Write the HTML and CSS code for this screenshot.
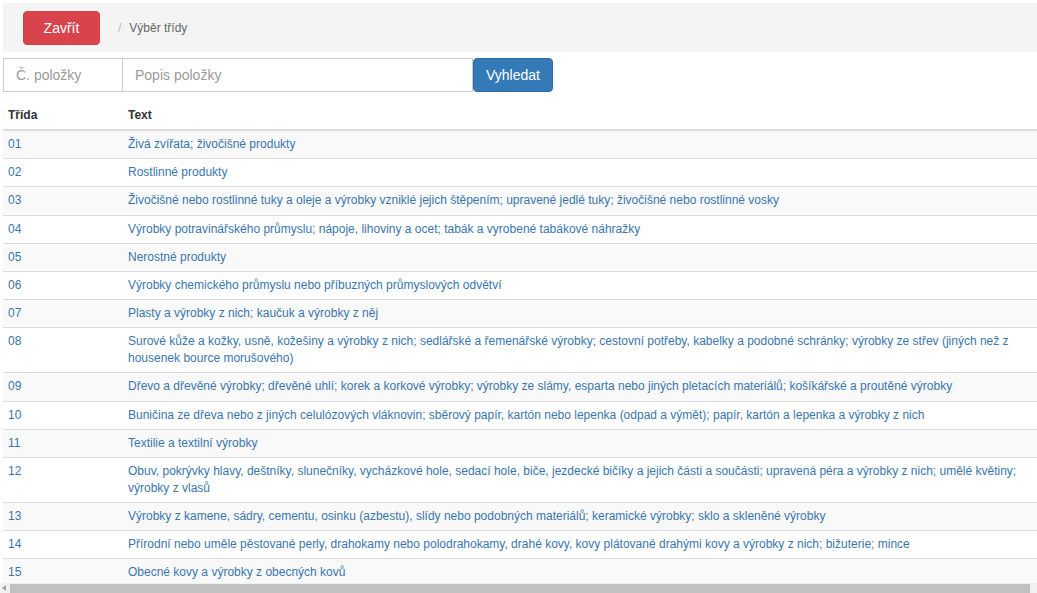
FILE: index.html
```html
<!DOCTYPE html>
<html lang="cs">
<head>
<meta charset="utf-8">
<title>Výběr třídy</title>
<link rel="stylesheet" href="styles.css">
</head>
<body>
<div class="page">
  <div class="crumbbar">
    <button class="btn btn-close" type="button">Zavřít</button>
    <span class="sep">/</span>
    <span class="crumb">Výběr třídy</span>
  </div>
  <form class="search">
    <input class="in in-num" type="text" placeholder="Č. položky">
    <input class="in in-desc" type="text" placeholder="Popis položky">
    <button class="btn btn-search" type="button">Vyhledat</button>
  </form>
  <div class="tablewrap">
    <table class="grid">
      <thead>
        <tr><th class="c1">Třída</th><th>Text</th></tr>
      </thead>
      <tbody>
        <tr><td>01</td><td>Živá zvířata; živočišné produkty</td></tr>
        <tr><td>02</td><td>Rostlinné produkty</td></tr>
        <tr><td>03</td><td>Živočišné nebo rostlinné tuky a oleje a výrobky vzniklé jejich štěpením; upravené jedlé tuky; živočišné nebo rostlinné vosky</td></tr>
        <tr><td>04</td><td>Výrobky potravinářského průmyslu; nápoje, lihoviny a ocet; tabák a vyrobené tabákové náhražky</td></tr>
        <tr><td>05</td><td>Nerostné produkty</td></tr>
        <tr><td>06</td><td>Výrobky chemického průmyslu nebo příbuzných průmyslových odvětví</td></tr>
        <tr><td>07</td><td>Plasty a výrobky z nich; kaučuk a výrobky z něj</td></tr>
        <tr><td>08</td><td>Surové kůže a kožky, usně, kožešiny a výrobky z nich; sedlářské a řemenářské výrobky; cestovní potřeby, kabelky a podobné schránky; výrobky ze střev (jiných než z housenek bource morušového)</td></tr>
        <tr><td>09</td><td>Dřevo a dřevěné výrobky; dřevěné uhlí; korek a korkové výrobky; výrobky ze slámy, esparta nebo jiných pletacích materiálů; košíkářské a proutěné výrobky</td></tr>
        <tr><td>10</td><td>Buničina ze dřeva nebo z jiných celulózových vláknovin; sběrový papír, kartón nebo lepenka (odpad a výmět); papír, kartón a lepenka a výrobky z nich</td></tr>
        <tr><td>11</td><td>Textilie a textilní výrobky</td></tr>
        <tr><td>12</td><td>Obuv, pokrývky hlavy, deštníky, slunečníky, vycházkové hole, sedací hole, biče, jezdecké bičíky a jejich části a součásti; upravená péra a výrobky z nich; umělé květiny; výrobky z vlasů</td></tr>
        <tr><td>13</td><td>Výrobky z kamene, sádry, cementu, osinku (azbestu), slídy nebo podobných materiálů; keramické výrobky; sklo a skleněné výrobky</td></tr>
        <tr><td>14</td><td>Přírodní nebo uměle pěstované perly, drahokamy nebo polodrahokamy, drahé kovy, kovy plátované drahými kovy a výrobky z nich; bižuterie; mince</td></tr>
        <tr><td>15</td><td>Obecné kovy a výrobky z obecných kovů</td></tr>
      </tbody>
    </table>
  </div>
</div>
<div class="hscroll">
  <span class="arrow"></span>
  <span class="thumb"></span>
</div>
</body>
</html>
```

FILE: styles.css
```css
* { box-sizing: border-box; }

html, body {
  margin: 0;
  padding: 0;
  background: #fff;
  font-family: "Liberation Sans", Arial, Helvetica, sans-serif;
  color: #333;
  overflow: hidden;
}

.page {
  padding: 3px 0 0 3px;
}

.crumbbar {
  display: flex;
  align-items: center;
  height: 49px;
  padding: 0 0 0 20px;
  background: #f4f4f4;
  font-size: 12px;
}

.btn {
  border: 1px solid transparent;
  border-radius: 4px;
  font-family: inherit;
  font-size: 14px;
  line-height: 20px;
  cursor: pointer;
  color: #fff;
}

.btn-close {
  height: 34px;
  width: 77px;
  padding: 0;
  background: #d9434c;
  border-color: #d43f47;
  margin-top: 1px;
}

.sep {
  color: #b9b9b9;
  margin-left: 18px;
  margin-right: 8px;
}

.crumb {
  color: #666;
}

.search {
  display: flex;
  margin: 6px 0 0 0;
  height: 34px;
}

.in {
  height: 34px;
  border: 1px solid #ccc;
  padding: 6px 12px;
  font-family: inherit;
  font-size: 14px;
  color: #555;
  background: #fff;
  outline: none;
}

.in::placeholder { color: #9a9a9a; }

.in-num {
  width: 120px;
  border-radius: 0;
}

.in-desc {
  width: 350px;
  border-left: 0;
  border-radius: 0;
}

.btn-search {
  width: 80px;
  height: 34px;
  padding: 0;
  background: #337ab7;
  border-color: #2e6da4;
}

.tablewrap {
  margin-top: 10px;
  width: 1034px;
  overflow: hidden;
}

.grid {
  width: 1040px;
  border-collapse: collapse;
  border-spacing: 0;
  font-size: 12px;
  line-height: 1.42857;
}

.grid th {
  text-align: left;
  font-weight: bold;
  color: #333;
  padding: 5px 5px;
  border-bottom: 2px solid #ddd;
}

.grid th.c1 { width: 120px; }

.grid td {
  padding: 5px 5px;
  border-top: 1px solid #ddd;
  color: #3a76ad;
  vertical-align: top;
}

.grid thead + tbody tr:first-child td { border-top: 0; }

.grid td:last-child { padding-right: 18px; }

.grid tbody tr:nth-child(odd) td { background: #f9f9f9; }

.hscroll {
  position: fixed;
  left: 0;
  right: 0;
  bottom: 0;
  height: 10px;
  background: #f1f1f1;
}

.hscroll .arrow {
  position: absolute;
  left: 2px;
  top: 2px;
  width: 0;
  height: 0;
  border-top: 3px solid transparent;
  border-bottom: 3px solid transparent;
  border-right: 4px solid #a3a3a3;
}

.hscroll .thumb {
  position: absolute;
  left: 10px;
  right: 7px;
  top: 1px;
  bottom: 0;
  background: #c1c1c1;
}
```
